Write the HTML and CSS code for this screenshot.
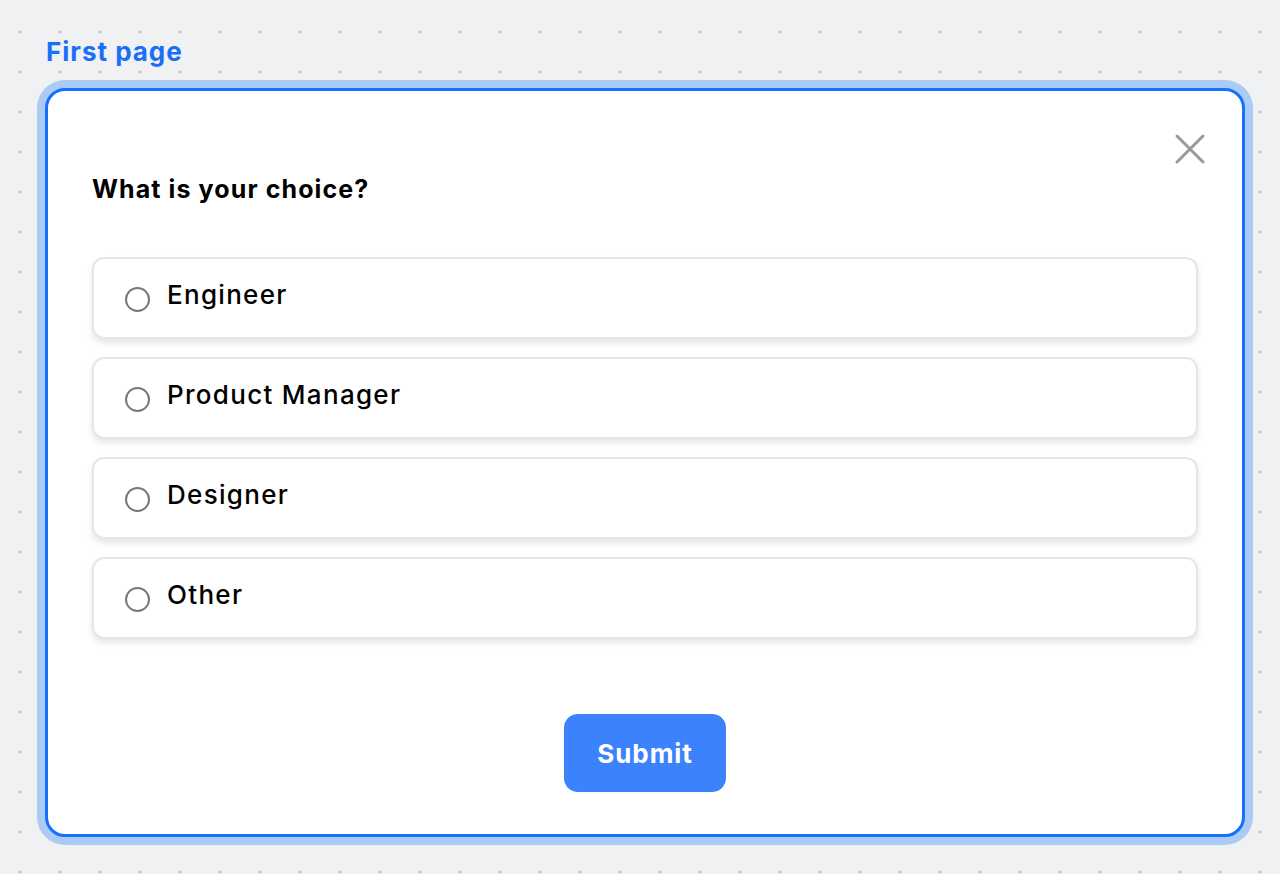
FILE: index.html
```html
<!DOCTYPE html>
<html lang="en">
<head>
<meta charset="utf-8">
<title>First page</title>
<link rel="stylesheet" href="styles.css">
</head>
<body>
<main class="page">
  <h1 class="page-title">First page</h1>
  <section class="card">
    <button class="close" aria-label="Close">
      <svg width="32" height="32" viewBox="0 0 32 32"><path d="M3 3 L29 29 M29 3 L3 29" stroke="#999" stroke-width="3" stroke-linecap="round" fill="none"/></svg>
    </button>
    <h2 class="question">What is your choice?</h2>
    <div class="options">
      <label class="option"><span class="radio"></span><span class="option-text">Engineer</span></label>
      <label class="option"><span class="radio"></span><span class="option-text">Product Manager</span></label>
      <label class="option"><span class="radio"></span><span class="option-text">Designer</span></label>
      <label class="option"><span class="radio"></span><span class="option-text">Other</span></label>
    </div>
    <div class="actions">
      <button class="submit">Submit</button>
    </div>
  </section>
</main>
</body>
</html>
```
FILE: styles.css
```css
* { box-sizing: border-box; }
html, body { margin: 0; padding: 0; }
body {
  width: 1280px;
  height: 874px;
  overflow: hidden;
  background-color: #f0f1f3;
  background-image: radial-gradient(circle, #cbcccf 1.4px, transparent 2px);
  background-size: 40px 40px;
  background-position: 0 12px;
  font-family: Inter, "Noto Sans", sans-serif;
  color: #000;
}
.page {
  padding: 34px 35px 0 45px;
}
.page-title {
  margin: 0 0 18px 1px;
  font-size: 26px;
  line-height: 36px;
  font-weight: 700;
  color: #1a6ff7;
  letter-spacing: 1px;
}
.card {
  position: relative;
  width: 1200px;
  height: 749px;
  background: #fff;
  border: 3px solid #1570ff;
  border-radius: 20px;
  box-shadow: 0 0 0 8px #abcaf6;
  padding: 83px 44px 0 44px;
}
.close {
  position: absolute;
  top: 42px;
  right: 36px;
  width: 32px;
  height: 32px;
  padding: 0;
  border: 0;
  background: none;
}
.close svg { display: block; }
.question {
  margin: 0;
  font-size: 25px;
  line-height: 30px;
  font-weight: 700;
  letter-spacing: 1.1px;
}
.options {
  margin-top: 53px;
  display: flex;
  flex-direction: column;
  gap: 18px;
}
.option {
  height: 82px;
  display: flex;
  align-items: center;
  padding: 0 0 0 31px;
  border: 2px solid #e6e6e6;
  border-radius: 12px;
  background: #fff;
  box-shadow: 0 4px 6px rgba(0,0,0,0.10);
}
.radio {
  width: 25px;
  height: 25px;
  border: 2px solid #777;
  border-radius: 50%;
  margin-top: 2px;
  flex: none;
}
.option-text {
  margin-left: 17px;
  font-size: 26px;
  line-height: 30px;
  font-weight: 500;
  letter-spacing: 1.3px;
  margin-top: -6px;
}
.actions {
  margin-top: 75px;
  display: flex;
  justify-content: center;
}
.submit {
  width: 162px;
  height: 78px;
  border: 0;
  border-radius: 14px;
  background: #3c82fc;
  color: #fff;
  font-family: inherit;
  font-size: 26px;
  font-weight: 700;
  letter-spacing: 0.9px;
}
```
